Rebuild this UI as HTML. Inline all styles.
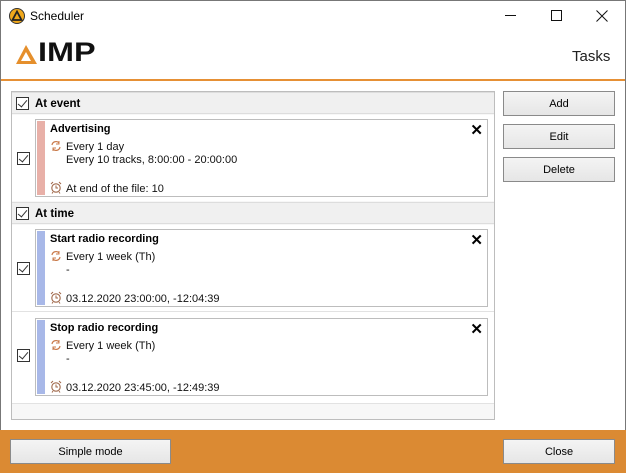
<!DOCTYPE html>
<html><head><meta charset="utf-8"><style>
*{margin:0;padding:0;box-sizing:border-box}
body{width:626px;height:473px;position:relative;overflow:hidden;background:#fff;font-family:"Liberation Sans",sans-serif;font-size:11px;color:#000}
.a{position:absolute}
.btn{position:absolute;background:linear-gradient(#f4f4f4,#e6e6e6);border:1px solid #8a8a8a;text-align:center;font-size:11px;line-height:23px;padding-top:1px;color:#000}
.cb{position:absolute;width:13px;height:13px;border:1px solid #333;background:#fff}
.cb:after{content:"";position:absolute;left:3px;top:0px;width:4px;height:8px;border-right:1.3px solid #333;border-bottom:1.3px solid #333;transform:rotate(40deg)}
.grp{position:absolute;left:12px;width:482px;height:22px;background:#f0f0f0;border-bottom:1px solid #ddd;border-top:1px solid #ddd}
.grp b{position:absolute;left:23px;top:5px;font-size:11.5px}
.card{position:absolute;left:35px;width:453px;border:1px solid #bdbdbd;background:#fff}
.bar{position:absolute;left:1px;top:1px;bottom:1px;width:8px}
.t{position:absolute;left:14px;top:3px;font-weight:bold;font-size:11px}
.x{position:absolute;right:4px;top:1px;font-size:15px;font-weight:bold}
.ln{position:absolute;left:30px;font-size:11px;color:#111;white-space:nowrap}
.ic{position:absolute;left:14px}
</style></head><body>
<svg width="0" height="0" style="position:absolute"><defs>
<g id="rep"><path d="M2 5A4 4 0 0 1 9 3M10 7A4 4 0 0 1 3 9" fill="none" stroke="#c97a4a" stroke-width="1.2"/><path d="M9 1V4H6M3 11V8H6" fill="none" stroke="#c97a4a" stroke-width="1"/></g>
<g id="clk"><circle cx="6" cy="7" r="4.2" fill="none" stroke="#a0684a" stroke-width="1.1"/><path d="M6 4.5V7H8M1 3L3 1M11 3L9 1M3 11L2 12.5M9 11L10 12.5" fill="none" stroke="#a0684a" stroke-width="1"/></g>
</defs></svg>
<div class="a" style="left:0;top:0;width:626px;height:473px;border:1px solid #777;border-bottom:none"></div>
<svg class="a" style="left:9px;top:8px" width="16" height="16"><circle cx="8" cy="8" r="7.5" fill="#f0a81c" stroke="#333"/><path d="M8 3.5L12.5 12H3.5Z" fill="none" stroke="#222" stroke-width="1.8"/></svg>
<div class="a" style="left:30px;top:9px;font-size:12px">Scheduler</div>
<div class="a" style="left:505px;top:15px;width:11px;height:1px;background:#111"></div>
<div class="a" style="left:551px;top:10px;width:11px;height:11px;border:1px solid #111"></div>
<svg class="a" style="left:596px;top:10px" width="12" height="12"><path d="M0.5 0.5L11.5 11.5M11.5 0.5L0.5 11.5" stroke="#111" stroke-width="1"/></svg>
<svg class="a" style="left:16px;top:45px" width="22" height="19"><path d="M10 0L21 19H0Z M10 7L5 16H15Z" fill="#e58f2c" fill-rule="evenodd"/></svg>
<div class="a" style="left:38px;top:37px;font-size:27px;line-height:30px;font-weight:bold;color:#111;transform:scaleX(1.2);transform-origin:left top">IMP</div>
<div class="a" style="left:572px;top:48px;font-size:15px;color:#222">Tasks</div>
<div class="a" style="left:1px;top:79px;width:624px;height:2px;background:#e69035"></div>

<div class="a" style="left:11px;top:91px;width:484px;height:329px;border:1px solid #bdbdbd;background:#f7f7f7"></div>
<div class="grp" style="top:92px"><div class="cb" style="left:4px;top:4px"></div><b>At event</b></div>
<div class="a" style="left:12px;top:115px;width:482px;height:86px;background:#fff"></div>
<div class="cb" style="left:17px;top:152px"></div>
<div class="card" style="top:119px;height:78px"><div class="bar" style="background:#e8b0a8"></div>
<div class="t">Advertising</div><div class="x">✕</div>
<svg class="ic" style="top:20px" width="12" height="12"><use href="#rep"/></svg>
<div class="ln" style="top:21px">Every 1 day</div>
<div class="ln" style="top:34px">Every 10 tracks, 8:00:00 - 20:00:00</div>
<svg class="ic" style="top:61px" width="12" height="13"><use href="#clk"/></svg>
<div class="ln" style="top:63px">At end of the file: 10</div></div>

<div class="grp" style="top:202px"><div class="cb" style="left:4px;top:4px"></div><b>At time</b></div>
<div class="a" style="left:12px;top:225px;width:482px;height:178px;background:#fff"></div>
<div class="cb" style="left:17px;top:262px"></div>
<div class="card" style="top:229px;height:78px"><div class="bar" style="background:#a8b8e8"></div>
<div class="t">Start radio recording</div><div class="x">✕</div>
<svg class="ic" style="top:20px" width="12" height="12"><use href="#rep"/></svg>
<div class="ln" style="top:21px">Every 1 week (Th)</div>
<div class="ln" style="top:34px">-</div>
<svg class="ic" style="top:61px" width="12" height="13"><use href="#clk"/></svg>
<div class="ln" style="top:63px">03.12.2020 23:00:00, -12:04:39</div></div>
<div class="a" style="left:12px;top:311px;width:482px;height:1px;background:#e2e2e2"></div>
<div class="cb" style="left:17px;top:349px"></div>
<div class="card" style="top:318px;height:78px"><div class="bar" style="background:#a8b8e8"></div>
<div class="t">Stop radio recording</div><div class="x">✕</div>
<svg class="ic" style="top:20px" width="12" height="12"><use href="#rep"/></svg>
<div class="ln" style="top:21px">Every 1 week (Th)</div>
<div class="ln" style="top:34px">-</div>
<svg class="ic" style="top:61px" width="12" height="13"><use href="#clk"/></svg>
<div class="ln" style="top:63px">03.12.2020 23:45:00, -12:49:39</div></div>
<div class="a" style="left:12px;top:403px;width:482px;height:1px;background:#e2e2e2"></div>

<div class="btn" style="left:503px;top:91px;width:112px;height:25px">Add</div>
<div class="btn" style="left:503px;top:124px;width:112px;height:25px">Edit</div>
<div class="btn" style="left:503px;top:157px;width:112px;height:25px">Delete</div>

<div class="a" style="left:0;top:430px;width:626px;height:43px;background:#db8a33"></div>
<div class="btn" style="left:10px;top:439px;width:161px;height:25px">Simple mode</div>
<div class="btn" style="left:503px;top:439px;width:112px;height:25px">Close</div>
</body></html>
